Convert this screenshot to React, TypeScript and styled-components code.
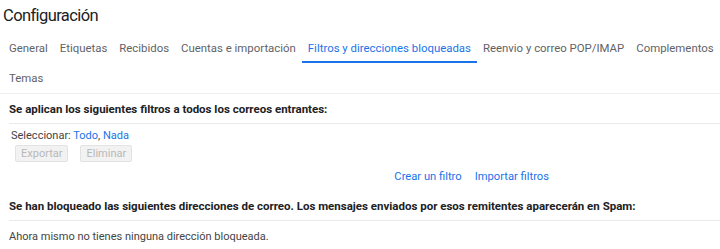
import { createGlobalStyle } from "styled-components";
import styled from "styled-components";

const GlobalStyle = createGlobalStyle`
  html, body {
    margin: 0;
    padding: 0;
    background: #fff;
  }
  body {
    font-family: Roboto, "Liberation Sans", Arial, sans-serif;
    color: #202124;
  }
`;

const Page = styled.div`
  width: 720px;
  height: 249px;
  overflow: hidden;
  background: #fff;
`;

const Title = styled.h1`
  margin: 0;
  height: 33px;
  padding-left: 3px;
  font-size: 16.5px;
  font-weight: 400;
  letter-spacing: -0.6px;
  line-height: 31px;
  color: #202124;
`;

const Tabs = styled.nav`
  display: flex;
  flex-wrap: wrap;
  padding-left: 3px;
  border-bottom: 1px solid #efefef;
`;

const Tab = styled.a<{ $active?: boolean }>`
  display: block;
  height: 30px;
  padding: 1px 6px 0;
  box-sizing: border-box;
  font-size: 11.4px;
  line-height: 29px;
  color: ${(p) => (p.$active ? "#1a73e8" : "#5f6368")};
  border-bottom: 2px solid ${(p) => (p.$active ? "#1a73e8" : "transparent")};
  cursor: pointer;
  white-space: nowrap;
`;

const Section = styled.section`
  padding-left: 9px;
`;

const Heading = styled.h2`
  margin: 0;
  height: 30px;
  padding-top: 8px;
  box-sizing: border-box;
  font-size: 11.5px;
  font-weight: 700;
  line-height: 14px;
  color: #202124;
  border-bottom: 1px solid #eaeaea;
`;

const SelectRow = styled.div`
  padding: 5px 0 0 2px;
  font-size: 11px;
  line-height: 14px;
  color: #444;
`;

const Link = styled.a`
  color: #1a73e8;
  cursor: pointer;
`;

const Buttons = styled.div`
  display: flex;
  gap: 12px;
  padding: 2px 0 0 6px;
`;

const GhostButton = styled.button`
  height: 17px;
  padding: 0 5px;
  font-family: Roboto, "Liberation Sans", Arial, sans-serif;
  font-size: 11px;
  line-height: 15px;
  color: #b8b8b8;
  background: #f2f2f2;
  border: 1px solid #e3e3e3;
  border-radius: 2px;
`;

const FilterActions = styled.div`
  display: flex;
  justify-content: flex-end;
  gap: 13px;
  width: 540px;
  height: 29px;
  padding-top: 7px;
  box-sizing: border-box;
  font-size: 11.2px;
  line-height: 16px;
`;

const Notice = styled.p`
  margin: 0;
  font-size: 11px;
  line-height: 32px;
  color: #444;
`;

export default function App() {
  const tabs = [
    "General",
    "Etiquetas",
    "Recibidos",
    "Cuentas e importación",
    "Filtros y direcciones bloqueadas",
    "Reenvio y correo POP/IMAP",
    "Complementos",
    "Temas",
  ];
  return (
    <Page>
      <GlobalStyle />
      <Title>Configuración</Title>
      <Tabs>
        {tabs.map((t) => (
          <Tab key={t} $active={t === "Filtros y direcciones bloqueadas"}>
            {t}
          </Tab>
        ))}
      </Tabs>
      <Section>
        <Heading>Se aplican los siguientes filtros a todos los correos entrantes:</Heading>
        <SelectRow>
          Seleccionar: <Link>Todo</Link>, <Link>Nada</Link>
        </SelectRow>
        <Buttons>
          <GhostButton disabled>Exportar</GhostButton>
          <GhostButton disabled>Eliminar</GhostButton>
        </Buttons>
        <FilterActions>
          <Link>Crear un filtro</Link>
          <Link>Importar filtros</Link>
        </FilterActions>
        <Heading>
          Se han bloqueado las siguientes direcciones de correo. Los mensajes enviados por esos remitentes aparecerán en Spam:
        </Heading>
        <Notice>Ahora mismo no tienes ninguna dirección bloqueada.</Notice>
      </Section>
    </Page>
  );
}
